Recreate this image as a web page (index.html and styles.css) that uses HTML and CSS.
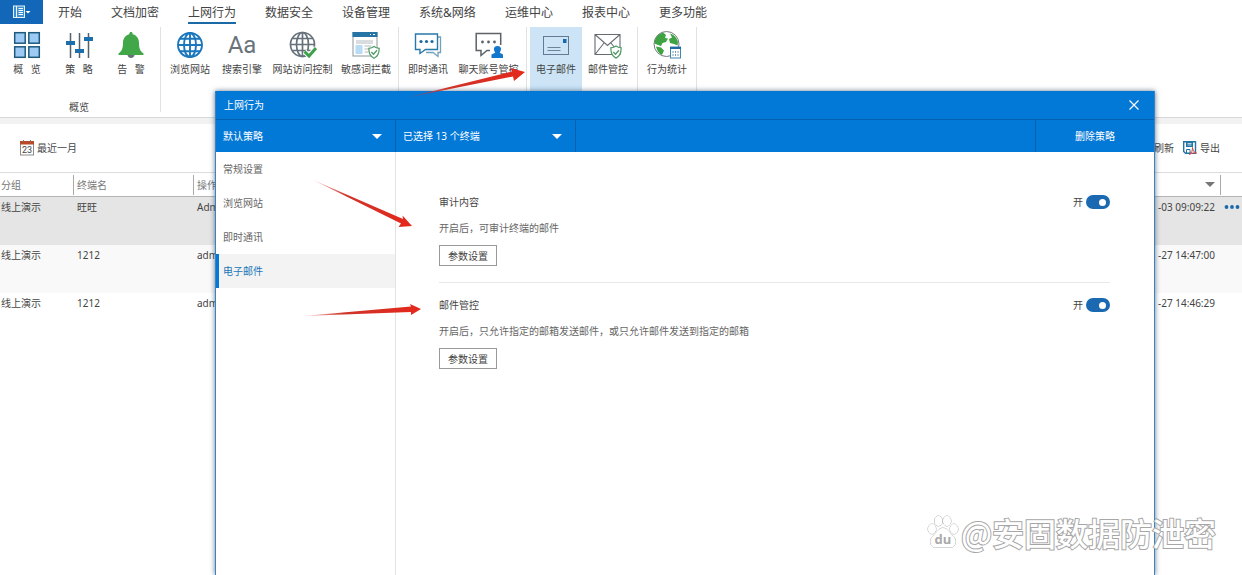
FILE: index.html
```html
<!DOCTYPE html>
<html lang="zh-CN">
<head>
<meta charset="utf-8">
<title>上网行为</title>
<link rel="stylesheet" href="styles.css">
</head>
<body>
<div class="app">
  <header class="menubar">
    <button class="app-button" aria-label="菜单">
      <svg width="18" height="14" viewBox="0 0 18 14"><rect x="0.5" y="1" width="11" height="11.5" fill="#3c8fd0" stroke="#e6f1fa"/><path d="M3.5 1v11M5.5 3.5h4.500M5.500 5.500h4.500M5.500 7.500h4.500M5.500 9.500h4.500" stroke="#fff"/><path d="M12.500 6h5L15 8.500z" fill="#fff"/></svg>
    </button>
    <nav class="tabs">
      <a href="#">开始</a><a href="#">文档加密</a><a href="#" class="current">上网行为</a><a href="#">数据安全</a><a href="#">设备管理</a><a href="#">系统&amp;网络</a><a href="#">运维中心</a><a href="#">报表中心</a><a href="#">更多功能</a>
    </nav>
  </header>

  <section class="ribbon">
    <div class="group first">
      <div class="tools">
        <button class="tool"><svg width="28" height="28" viewBox="0 0 28 28"><g fill="#9ccaf5" stroke="#1f5a7d" stroke-width="1.500"><rect x="1.700" y="1.700" width="10.500" height="10.500"/><rect x="15.800" y="1.700" width="10.500" height="10.500"/><rect x="1.700" y="15.800" width="10.500" height="10.500"/><rect x="15.800" y="15.800" width="10.500" height="10.500"/></g></svg><span>概&ensp;&nbsp;览</span></button>
        <button class="tool"><svg width="28" height="28" viewBox="0 0 28 28"><path d="M5.500 2v25M14.500 2v25M23.500 2v25" stroke="#566068" stroke-width="1.500"/><g fill="#1b6fae"><rect x="1" y="10" width="9" height="4"/><rect x="10" y="18" width="9" height="4"/><rect x="19" y="6" width="9" height="4"/></g></svg><span>策&ensp;&nbsp;略</span></button>
        <button class="tool"><svg width="28" height="28" viewBox="0 0 28 28"><path d="M10.500 23.500h7c0 2-1.500 3.500-3.500 3.500s-3.500-1.500-3.500-3.500z" fill="#68717a"/><path d="M12.300 3.200C12.300 1.500 13 1 14 1s1.700.5 1.700 2.200C20 4.500 22 7.500 22 12c0 5 1 8 4.500 10.500v1.500h-25v-1.500C5 20 6 17 6 12c0-4.500 2-7.500 6.300-8.800z" fill="#42a748"/></svg><span>告&ensp;&nbsp;警</span></button>
      </div>
      <div class="group-name">概览</div>
    </div>
    <div class="group">
      <div class="tools">
        <button class="tool"><svg width="28" height="28" viewBox="0 0 28 28"><g fill="none" stroke="#1c77bd" stroke-width="1.900"><circle cx="14" cy="14" r="12"/><ellipse cx="14" cy="14" rx="6" ry="12"/><path d="M14 2v24M2 14h24M4 7.800h20M4 20.200h20"/></g></svg><span>浏览网站</span></button>
        <button class="tool"><span class="aa">Aa</span><span>搜索引擎</span></button>
        <button class="tool wide"><svg width="28" height="28" viewBox="0 0 28 28"><g fill="none" stroke="#66707a" stroke-width="1.700"><circle cx="13.500" cy="13.500" r="12"/><ellipse cx="13.500" cy="13.500" rx="6" ry="12"/><path d="M13.500 1.500v24M1.500 13.500h24M3.500 7.500h20M3.500 19.500h20"/></g><path d="M15.500 20.500l4.500 4.500 7-8" fill="none" stroke="#fff" stroke-width="5"/><path d="M15.500 20.500l4.500 4.500 7-8" fill="none" stroke="#3fa04c" stroke-width="3"/></svg><span>网站访问控制</span></button>
        <button class="tool"><svg width="28" height="28" viewBox="0 0 28 28"><rect x="1" y="1.500" width="24" height="23.500" fill="#fff" stroke="#8d979e"/><rect x="0.500" y="1" width="25" height="5" fill="#2674a6"/><path d="M18 3.500h1M21 3.500h2" stroke="#fff"/><path d="M4 10h17M4 12h17" stroke="#b3bac0"/><rect x="3.500" y="14" width="7" height="9" fill="#b9dcf5"/><path d="M12.500 15h7M12.500 18h4M12.500 21h4" stroke="#b3bac0"/><path d="M22 15.500c1.500 1.200 3 1.700 5.200 1.800 0 5-1.200 8.200-5.200 10-4-1.800-5.200-5-5.200-10 2.200-.1 3.700-.6 5.200-1.800z" fill="#fff" stroke="#4f9a65" stroke-width="1.200"/><path d="M19.300 21l2.200 2.300 3.500-4" fill="none" stroke="#4f9a65" stroke-width="1.300"/></svg><span>敏感词拦截</span></button>
      </div>
    </div>
    <div class="group">
      <div class="tools">
        <button class="tool"><svg width="28" height="28" viewBox="0 0 28 28"><path d="M24 6h2.500v15.500h-2.500v4l-5-4h-7" fill="none" stroke="#71a1bd" stroke-width="1.300"/><path d="M1.500 3h22v15.500h-12l-5.500 4v-4H1.500z" fill="#fff" stroke="#2878a8" stroke-width="1.400"/><g fill="#1b6ba2"><circle cx="7" cy="10.500" r="1.600"/><circle cx="12.500" cy="10.500" r="1.600"/><circle cx="18" cy="10.500" r="1.600"/></g></svg><span>即时通讯</span></button>
        <button class="tool wide"><svg width="28" height="28" viewBox="0 0 28 28"><path d="M15 19.500h-3l-6 5v-5H1.200V2.500h24.500V14" fill="none" stroke="#5c6268" stroke-width="1.500"/><g fill="#5c6268"><circle cx="7.500" cy="11" r="1.400"/><circle cx="13.500" cy="11" r="1.400"/><circle cx="19.500" cy="11" r="1.400"/></g><path d="M22.500 15c2.500 0 3.800 1.500 3.500 3.600-.2 1.500-1 2.200-1.300 3.200l3.300 1.700V27H16.500v-3.500l3.700-1.700c-.3-1-1.100-1.700-1.300-3.200-.2-2.100 1.100-3.600 3.600-3.600z" fill="#1377cd"/></svg><span>聊天账号管控</span></button>
      </div>
    </div>
    <div class="group">
      <div class="tools">
        <button class="tool active"><svg width="28" height="28" viewBox="0 0 28 28"><rect x="1.500" y="5.500" width="25" height="18" fill="none" stroke="#617c92"/><rect x="21" y="8" width="3.500" height="4" fill="#1769ad"/><path d="M5.500 16.500h13M5.500 19.500h13" stroke="#6c8599"/></svg><span>电子邮件</span></button>
        <button class="tool"><svg width="28" height="28" viewBox="0 0 28 28"><path d="M1 3.500h25v20H1zM1 3.500l12.500 11L26 3.500M1 23.500l9-11.500M26 23.500L17 12" fill="none" stroke="#676c70" stroke-width="1.100"/><path d="M22 15c1.500 1.200 3 1.700 5.200 1.800 0 5-1.200 8.500-5.200 10.300-4-1.800-5.200-5.300-5.200-10.300 2.200-.1 3.700-.6 5.200-1.800z" fill="#fff" stroke="#4f9a65" stroke-width="1.200"/><path d="M19.300 21l2.200 2.300 3.500-4" fill="none" stroke="#4f9a65" stroke-width="1.300"/></svg><span>邮件管控</span></button>
      </div>
    </div>
    <div class="group">
      <div class="tools">
        <button class="tool"><svg width="28" height="28" viewBox="0 0 28 28"><circle cx="13.500" cy="13" r="12.500" fill="#fff" stroke="#737a80"/><path d="M10 1.500l3 2.500-1 3 3 .5-2 3.500-3.500 1L8 15l-3-1-3.500-1.500C1.500 7 5 3 10 1.500zM3 15.500l5 1 3 3-2 4.500C6 22.500 4 20 3 15.500zM17 2.500c4 1 7 4.500 8 8.500l-.5 3.500L21 13l-4-1-1-4 3-1.500z" fill="#3ea342"/><rect x="17.500" y="16" width="10" height="11" fill="#fff" stroke="#4285ad"/><path d="M17 17h11" stroke="#206ca0" stroke-width="2"/><path d="M20 20v5.500M22.500 20v5.500M25 20v5.500" stroke="#7d9eb4" stroke-dasharray="2 1"/></svg><span>行为统计</span></button>
      </div>
    </div>
  </section>

  <section class="filterbar">
    <button class="link-button"><svg width="14" height="16" viewBox="0 0 14 16"><rect x="0.500" y="2" width="13" height="13" fill="#fff" stroke="#8c8c8c"/><rect x="0" y="1" width="14" height="3.500" fill="#b84a27"/><path d="M3.500 0v2M10.500 0v2" stroke="#777"/><text x="7" y="13" text-anchor="middle" class="day">23</text></svg>最近一月</button>
    <div class="actions">
      <button class="link-button">刷新</button>
      <button class="link-button"><svg width="14" height="14" viewBox="0 0 14 14"><path d="M.7.700h11.800v11.500H2.500L.7 10.500z" fill="#fff" stroke="#2374a4" stroke-width="1.400"/><rect x="3" y="1" width="7" height="5" fill="#2374a4"/><path d="M4.500 2.500h4M4.500 4h4" stroke="#fff" stroke-width=".7"/><path d="M3.500 12V8.500H7V12" fill="none" stroke="#2374a4"/><path d="M6.500 13.500c2-1.500 3-3.500 3-7 .7 4 2 5 4 5.500-2.200-.4-4.500-.2-7 1.500z" fill="#fff" stroke="#d1473a"/></svg>导出</button>
    </div>
  </section>

  <table class="records">
    <colgroup><col class="c-group"><col class="c-name"><col><col class="c-time"><col class="c-more"></colgroup>
    <thead><tr><th><span>分组</span></th><th><span>终端名</span></th><th class="open"><span>操作</span></th><th class="time"><span><svg width="10" height="5" viewBox="0 0 10 5"><path d="M0 0h10L5 5z" fill="#777"/></svg></span></th><th></th></tr></thead>
    <tbody>
      <tr class="selected"><td>线上演示</td><td>旺旺</td><td>Admin</td><td class="time">-03 09:09:22</td><td><button class="more" aria-label="更多"><svg width="16" height="4" viewBox="0 0 16 4"><g fill="#1c68ad"><circle cx="2.500" cy="2" r="1.900"/><circle cx="8" cy="2" r="1.900"/><circle cx="13.500" cy="2" r="1.900"/></g></svg></button></td></tr>
      <tr class="alt"><td>线上演示</td><td>1212</td><td>admin</td><td class="time">-27 14:47:00</td><td></td></tr>
      <tr><td>线上演示</td><td>1212</td><td>admin</td><td class="time">-27 14:46:29</td><td></td></tr>
    </tbody>
  </table>

  <div class="dialog" role="dialog" aria-labelledby="dialog-title">
    <div class="titlebar">
      <span id="dialog-title">上网行为</span>
      <button class="close" aria-label="关闭"><svg width="10" height="10" viewBox="0 0 10 10"><path d="M.5.500l9 9M9.500.500l-9 9" stroke="#fff" stroke-width="1.200"/></svg></button>
    </div>
    <div class="policybar">
      <label class="picker"><select aria-label="策略"><option>默认策略</option></select></label>
      <label class="picker"><select aria-label="终端"><option>已选择 13 个终端</option></select></label>
      <button class="delete">删除策略</button>
    </div>
    <div class="dialog-body">
      <nav class="side">
        <a href="#">常规设置</a><a href="#">浏览网站</a><a href="#">即时通讯</a><a href="#" class="current">电子邮件</a>
      </nav>
      <div class="settings">
        <section class="setting">
          <div class="setting-head"><h2>审计内容</h2><label class="switch">开<input type="checkbox" checked></label></div>
          <p>开启后，可审计终端的邮件</p>
          <button class="params">参数设置</button>
        </section>
        <section class="setting">
          <div class="setting-head"><h2>邮件管控</h2><label class="switch">开<input type="checkbox" checked></label></div>
          <p>开启后，只允许指定的邮箱发送邮件，或只允许邮件发送到指定的邮箱</p>
          <button class="params">参数设置</button>
        </section>
      </div>
    </div>
  </div>

  <svg class="arrows" aria-hidden="true">
    <defs><linearGradient id="tail" x1="0" x2="1"><stop offset="0" stop-color="#d93025" stop-opacity=".2"/><stop offset=".35" stop-color="#cf3429"/><stop offset="1" stop-color="#e5281c"/></linearGradient></defs>
    <g fill="url(#tail)">
      <path d="M405 98L512 71.500L510.500 68L525 72L514 81L513 76.500Z"/>
      <path d="M312 179.500L403 219L402.500 215.500L412 226L398.500 227L401 223.500Z"/>
      <path d="M303 316L411 306.500L410 304L421 309L411 315L411 312Z"/>
    </g>
  </svg>

  <div class="watermark">
    <svg width="32" height="34" viewBox="0 0 32 34"><g fill="#fff" stroke="#adadad" stroke-width="1"><ellipse cx="5" cy="14" rx="4" ry="5"/><ellipse cx="11.500" cy="6" rx="4" ry="5"/><ellipse cx="20" cy="6" rx="4" ry="5"/><ellipse cx="27" cy="14" rx="4" ry="5"/><path d="M16 13c4 0 6 4 8.500 6.500 3 3 4.500 5 4 8-.6 4-3.500 5.300-6.500 5H10c-3 .3-6-1-6.500-5-.5-3 1-5 4-8C10 17 12 13 16 13z"/></g><text x="16" y="29" text-anchor="middle" class="du">du</text></svg>
    <span>@安固数据防泄密</span>
  </div>
</div>
</body>
</html>
```
FILE: styles.css
```css
* { box-sizing: border-box; }
body {
  margin: 0;
  background: #fff;
  color: #444;
  font: 10px/16px "Noto Sans", "Noto Sans CJK SC", sans-serif;
}
button, select, input { font: inherit; color: inherit; margin: 0; }
button { border: 0; padding: 0; background: none; cursor: pointer; }
a { color: inherit; text-decoration: none; }
svg { display: block; flex: none; }

.app { position: relative; min-height: 100vh; overflow: hidden; }

.menubar { display: flex; height: 24px; }
.app-button { display: flex; align-items: center; justify-content: center; width: 43px; background: #1267b8; }
.tabs { display: flex; gap: 29px; padding-left: 15px; font-size: 12px; line-height: 22px; color: #444; }
.tabs a { padding-top: 2px; white-space: nowrap; }
.tabs .current { box-shadow: inset 0 -2px #1b6aa5; }

.ribbon { display: flex; height: 94px; padding: 3px 0 5px; border-bottom: 1px solid #d8d8d8; }
.group { padding: 0 3px; border-right: 1px solid #e2e2e2; }
.group.first { padding-left: 1px; }
.tools { display: flex; }
.tool {
  display: flex; flex-direction: column; align-items: center; gap: 2px;
  min-width: 52px; height: 66px; padding: 4px 4px 0; white-space: nowrap;
}
.tool.wide { min-width: 69px; }
.tool.active { background: #cce4f6; }
.aa { font: 24px/28px Roboto, sans-serif; color: #69737c; }
.group-name { padding-top: 6px; text-align: center; }

.filterbar {
  display: flex; align-items: center; justify-content: space-between;
  height: 54px; padding: 0 22px 0 20px; border-top: 6px solid #f2f2f2;
}
.link-button { display: flex; align-items: center; gap: 3px; }
.actions { display: flex; gap: 9px; }
.day { font: 9px Roboto, sans-serif; fill: #444; }

.records { width: 100%; table-layout: fixed; border-collapse: collapse; }
.c-group { width: 74px; }
.c-name { width: 120px; }
.c-time { width: 90px; }
.c-more { width: 21px; }
.records tr { height: 48px; }
.records thead tr { height: 24px; border-top: 1px solid #ddd; border-bottom: 1px solid #b5b5b5; }
.records th { padding: 0; text-align: left; font-weight: 400; color: #777; }
.records th span { display: flex; align-items: center; height: 20px; padding-left: 3px; border-right: 1px solid #aaa; }
.records th:first-child span { padding-left: 1px; }
.records th.open span { border-right: 0; }
.records th.time span { justify-content: flex-end; padding-right: 5px; }
.records td { padding: 2px 0 0 3px; vertical-align: top; white-space: nowrap; }
.records td:first-child { padding-left: 1px; }
.records td.time { padding-right: 6px; text-align: right; }
.selected { background: #e5e5e5; }
.alt { background: #f9f9f9; }
.more { display: flex; align-items: center; height: 16px; }

.dialog {
  position: absolute; top: 91px; right: 87px; bottom: 0; left: 215px;
  display: flex; flex-direction: column;
  border: solid #3983c2; border-width: 0 1px; background: #fff;
  box-shadow: 0 0 5px rgba(30, 60, 90, .7);
}
.titlebar {
  display: flex; align-items: center; justify-content: space-between;
  height: 29px; padding: 0 15px 0 8px; border-bottom: 1px solid #0560ad;
  background: #0278d7; color: #fff;
}
.policybar { display: flex; height: 32px; background: #0278d7; color: #fff; }
.picker { position: relative; width: 180px; border-right: 1px solid #0560ad; }
.picker select { width: 100%; height: 100%; padding: 0 7px; border: 0; background: none; appearance: none; }
.picker option { color: #444; background: #fff; }
.picker::after {
  content: ""; position: absolute; top: 14px; right: 13px;
  border: 5px solid transparent; border-top-color: #fff; border-bottom: 0; pointer-events: none;
}
.delete { width: 119px; margin-left: auto; border-left: 1px solid #0560ad; }
.dialog-body { display: flex; flex: 1; }
.side { display: flex; flex-direction: column; width: 180px; border-right: 1px solid #e3e3e3; color: #666; }
.side a { padding-left: 7px; line-height: 34px; }
.side .current { background: #f3f3f3; color: #1b76b8; box-shadow: inset 3px 0 #0278d7; }
.settings { flex: 1; padding: 28px 44px 0 43px; }
.setting { padding: 14px 0 16px; }
.setting + .setting { border-top: 1px solid #e8e8e8; }
.setting-head { display: flex; align-items: center; justify-content: space-between; height: 16px; }
.setting h2 { margin: 0; font: inherit; }
.setting p { margin: 10px 0 9px; color: #666; }
.params { display: block; width: 58px; height: 21px; border: 1px solid #999; line-height: 18px; }
.switch { display: flex; align-items: center; gap: 3px; }
.switch input {
  display: flex; align-items: center; justify-content: flex-end; appearance: none;
  width: 24px; height: 14px; padding: 0 4px; border-radius: 7px; background: #1b69b0;
}
.switch input::before { content: ""; width: 7px; height: 7px; border-radius: 50%; background: #fff; }

.arrows { position: absolute; top: 0; left: 0; width: 100%; height: 100%; pointer-events: none; }

.watermark {
  position: absolute; right: 26px; bottom: 25px;
  display: flex; align-items: center; gap: 1px; pointer-events: none;
  font: 500 32px/36px "Noto Sans CJK SC", sans-serif; color: #fff;
  -webkit-text-stroke: 2px #a6a6a6; paint-order: stroke fill;
}
.watermark svg { margin-right: 1px; }
.du { font: bold 13px "Open Sans", sans-serif; fill: #aaa; -webkit-text-stroke: 0; }
```
